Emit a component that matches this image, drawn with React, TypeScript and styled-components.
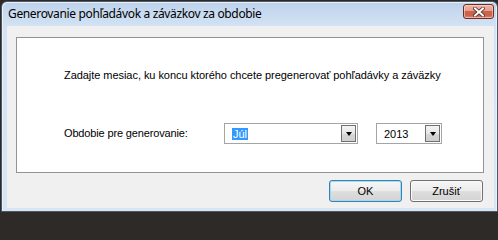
import React from "react";
import styled, { createGlobalStyle } from "styled-components";

const Global = createGlobalStyle`
  html, body { margin: 0; padding: 0; }
  body {
    background: #2e2a27;
    font-family: "Liberation Sans", Arial, sans-serif;
  }
`;

const Desktop = styled.div`
  width: 498px;
  height: 213px;
  padding: 1px 0 0 1px;
  box-sizing: border-box;
  overflow: hidden;
`;

const Window = styled.div`
  width: 497px;
  height: 211px;
  box-sizing: border-box;
  border: 1px solid #4d5866;
  border-radius: 6px 6px 0 0;
  background: linear-gradient(to bottom, #bdd2eb 0px, #c9dbf0 12px, #d4e3f4 26px, #d7e5f4 100%);
  display: flex;
  flex-direction: column;
  box-shadow: inset 1px 1px 0 #e9f1fa, inset -1px 0 0 #e9f1fa;
`;

const TitleBar = styled.div`
  height: 24px;
  flex: none;
  display: flex;
  justify-content: space-between;
  align-items: flex-start;
  padding: 0 3px 0 6px;
`;

const Title = styled.div`
  font-family: "Noto Sans", "Open Sans", sans-serif;
  font-size: 12px;
  line-height: 24px;
  color: #000;
  white-space: nowrap;
  letter-spacing: -0.35px;
`;

const CloseButton = styled.div`
  margin-top: 2px;
  width: 31px;
  height: 15px;
  box-sizing: border-box;
  border: 1px solid #6b2d24;
  border-radius: 3px;
  background: linear-gradient(to bottom, #ecb6a8 0%, #e49e8c 45%, #d0604a 50%, #cb634d 80%, #db8e74 100%);
  box-shadow: inset 0 0 0 1px rgba(255, 220, 210, 0.55);
  display: flex;
  align-items: center;
  justify-content: center;
`;

const Client = styled.div`
  flex: 1;
  margin: 0 3px 3px 5px;
  background: #f0f0f0;
  display: flex;
  flex-direction: column;
  padding: 11px 10px 6px 9px;
  box-sizing: border-box;
`;

const Panel = styled.div`
  height: 136px;
  box-sizing: border-box;
  background: #fff;
  border: 1px solid #939393;
  padding: 31px 0 0 47px;
  display: flex;
  flex-direction: column;
`;

const Text = styled.div`
  font-size: 11px;
  line-height: 13px;
  color: #000;
  white-space: nowrap;
  letter-spacing: -0.05px;
`;

const FieldRow = styled.div`
  margin-top: 41px;
  display: flex;
  align-items: center;
`;

const Label = styled(Text)`
  width: 160px;
  letter-spacing: -0.15px;
`;

const Combo = styled.div<{ $w: number; $gap?: number }>`
  width: ${(p) => p.$w}px;
  margin-left: ${(p) => p.$gap ?? 0}px;
  height: 21px;
  box-sizing: border-box;
  border: 1px solid #a5a5a5;
  background: #fff;
  display: flex;
  align-items: center;
  justify-content: space-between;
  padding: 0 1px 0 ${(p) => (p.$gap ? 6 : 7)}px;
`;

const ComboValue = styled.span<{ $selected?: boolean }>`
  font-size: 11px;
  line-height: 12px;
  padding: 0 1px;
  color: ${(p) => (p.$selected ? "#fff" : "#000")};
  background: ${(p) => (p.$selected ? "#3399ff" : "transparent")};
`;

const DropButton = styled.div`
  width: 15px;
  height: 17px;
  box-sizing: border-box;
  border: 1px solid #707070;
  background: linear-gradient(to bottom, #f4f4f4 0%, #e6e6e6 50%, #d6d6d6 51%, #cfcfcf 100%);
  display: flex;
  align-items: center;
  justify-content: center;
`;

const Arrow = styled.div`
  width: 0;
  height: 0;
  border-left: 3.5px solid transparent;
  border-right: 3.5px solid transparent;
  border-top: 4px solid #000;
  margin-top: 1px;
`;

const Footer = styled.div`
  margin-top: 7px;
  display: flex;
  justify-content: flex-end;
  gap: 8px;
  padding-right: 1px;
`;

const Button = styled.div<{ $default?: boolean }>`
  width: 73px;
  height: 22px;
  box-sizing: border-box;
  border: 1px solid ${(p) => (p.$default ? "#3c7fb1" : "#707070")};
  border-radius: 3px;
  background: linear-gradient(to bottom, #f6f6f6 0%, #ececec 48%, #dedede 52%, #d3d3d3 100%);
  box-shadow: inset 0 0 0 1px ${(p) => (p.$default ? "#9ddcf3" : "#fbfbfb")};
  font-size: 11px;
  color: #000;
  display: flex;
  align-items: center;
  justify-content: center;
`;

export default function App() {
  return (
    <>
      <Global />
      <Desktop>
        <Window>
          <TitleBar>
            <Title>Generovanie pohľadávok a záväzkov za obdobie</Title>
            <CloseButton>
              <svg width="12" height="10" viewBox="0 0 12 10">
                <path d="M2 1.5 L10 8.5 M10 1.5 L2 8.5" stroke="#4a2a25" strokeWidth="3.6" strokeLinecap="square" />
                <path d="M2 1.5 L10 8.5 M10 1.5 L2 8.5" stroke="#fff" strokeWidth="2" strokeLinecap="square" />
              </svg>
            </CloseButton>
          </TitleBar>
          <Client>
            <Panel>
              <Text>Zadajte mesiac, ku koncu ktorého chcete pregenerovať pohľadávky a záväzky</Text>
              <FieldRow>
                <Label>Obdobie pre generovanie:</Label>
                <Combo $w={134}>
                  <ComboValue $selected>Júl</ComboValue>
                  <DropButton>
                    <Arrow />
                  </DropButton>
                </Combo>
                <Combo $w={66} $gap={18}>
                  <ComboValue>2013</ComboValue>
                  <DropButton>
                    <Arrow />
                  </DropButton>
                </Combo>
              </FieldRow>
            </Panel>
            <Footer>
              <Button $default>OK</Button>
              <Button>Zrušiť</Button>
            </Footer>
          </Client>
        </Window>
      </Desktop>
    </>
  );
}
